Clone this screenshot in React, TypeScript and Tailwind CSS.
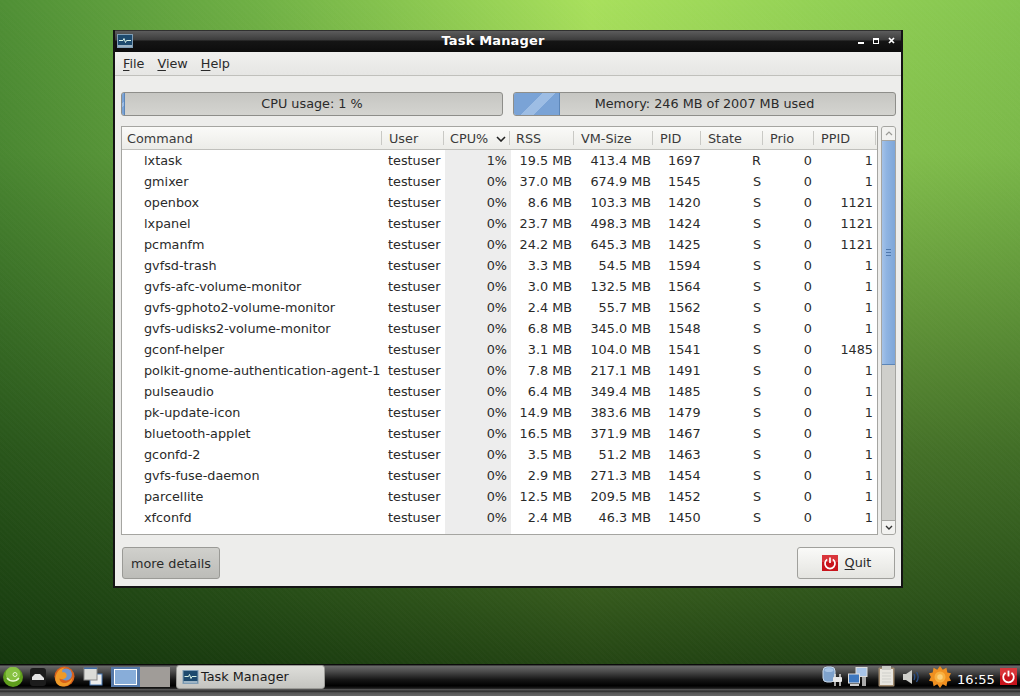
import React from 'react';

const FONT = "font-['DejaVu_Sans',sans-serif]";

type Proc = [string, string, string, string, string, string, string];

const rows: Proc[] = [
  ['lxtask', '1%', '19.5 MB', '413.4 MB', '1697', 'R', '1'],
  ['gmixer', '0%', '37.0 MB', '674.9 MB', '1545', 'S', '1'],
  ['openbox', '0%', '8.6 MB', '103.3 MB', '1420', 'S', '1121'],
  ['lxpanel', '0%', '23.7 MB', '498.3 MB', '1424', 'S', '1121'],
  ['pcmanfm', '0%', '24.2 MB', '645.3 MB', '1425', 'S', '1121'],
  ['gvfsd-trash', '0%', '3.3 MB', '54.5 MB', '1594', 'S', '1'],
  ['gvfs-afc-volume-monitor', '0%', '3.0 MB', '132.5 MB', '1564', 'S', '1'],
  ['gvfs-gphoto2-volume-monitor', '0%', '2.4 MB', '55.7 MB', '1562', 'S', '1'],
  ['gvfs-udisks2-volume-monitor', '0%', '6.8 MB', '345.0 MB', '1548', 'S', '1'],
  ['gconf-helper', '0%', '3.1 MB', '104.0 MB', '1541', 'S', '1485'],
  ['polkit-gnome-authentication-agent-1', '0%', '7.8 MB', '217.1 MB', '1491', 'S', '1'],
  ['pulseaudio', '0%', '6.4 MB', '349.4 MB', '1485', 'S', '1'],
  ['pk-update-icon', '0%', '14.9 MB', '383.6 MB', '1479', 'S', '1'],
  ['bluetooth-applet', '0%', '16.5 MB', '371.9 MB', '1467', 'S', '1'],
  ['gconfd-2', '0%', '3.5 MB', '51.2 MB', '1463', 'S', '1'],
  ['gvfs-fuse-daemon', '0%', '2.9 MB', '271.3 MB', '1454', 'S', '1'],
  ['parcellite', '0%', '12.5 MB', '209.5 MB', '1452', 'S', '1'],
  ['xfconfd', '0%', '2.4 MB', '46.3 MB', '1450', 'S', '1'],
  ['menu-cached', '0%', '2.4 MB', '52.2 MB', '1445', 'S', '1'],
];

const GRID = 'grid grid-cols-[261px_62px_66px_64px_79px_48px_62px_51px_62px]';

function Underlined({ first, rest }: { first: string; rest: string }) {
  return (
    <span>
      <span className="underline underline-offset-2">{first}</span>
      {rest}
    </span>
  );
}

function MonitorIcon({ className }: { className: string }) {
  return (
    <svg viewBox="0 0 16 14" className={className}>
      <rect x="0.5" y="0.5" width="15" height="13" fill="#1d4a6e" stroke="#7f9db5" />
      <rect x="1" y="11" width="14" height="2" fill="#9db4c4" />
      <path d="M2 6.5h4l1-2 1.5 4 1-2h4.5" fill="none" stroke="#d5f0e6" strokeWidth="1" />
    </svg>
  );
}

function PowerIcon({ className }: { className: string }) {
  return (
    <svg viewBox="0 0 16 16" className={className}>
      <rect width="16" height="16" fill="#c8141c" />
      <rect width="16" height="7" fill="#d9353a" />
      <path d="M5.2 4.4a5 5 0 1 0 5.6 0" fill="none" stroke="#fff" strokeWidth="1.7" />
      <path d="M8 2.5v5.5" stroke="#fff" strokeWidth="1.7" />
    </svg>
  );
}

function Meter({ label, fill, className }: { label: string; fill: number; className: string }) {
  return (
    <div className={`relative h-[24px] rounded-[3px] border border-[#8e8e8a] bg-[linear-gradient(#c6c6c2,#d4d4d0)] flex items-center justify-center overflow-hidden ${className}`}>
      <div
        className="absolute left-0 top-0 bottom-0 border-r border-[#5c86b8] bg-[linear-gradient(135deg,#7aa3d6_0%,#7aa3d6_42%,#9dbde4_42%,#9dbde4_62%,#7aa3d6_62%)]"
        style={{ width: fill }}
      />
      <span className="relative">{label}</span>
    </div>
  );
}

function Header({ label, sorted, tight }: { label: string; sorted?: boolean; tight?: boolean }) {
  return (
    <div className={`flex items-center justify-between pr-[5px] pt-[1px] relative ${tight ? 'pl-[5px]' : 'pl-[6px]'}`}>
      <span>{label}</span>
      {sorted && (
        <svg viewBox="0 0 10 6" className="w-[10px] h-[6px]">
          <path d="M1 1l4 4 4-4" fill="none" stroke="#222" strokeWidth="1.6" />
        </svg>
      )}
      <span className="absolute right-[1px] top-1 bottom-1 w-px bg-[#c9c9c5]" />
    </div>
  );
}

function Scrollbar() {
  return (
    <div className="w-[15px] h-[409px] ml-[3px] flex flex-col rounded-[3px] border border-[#a5a5a1] bg-[#cfcfcb] overflow-hidden">
      <div className="h-[14px] flex items-center justify-center bg-[#f2f2f0] border-b border-[#a5a5a1]">
        <svg viewBox="0 0 8 5" className="w-2 h-[5px]">
          <path d="M1 4l3-3 3 3" fill="none" stroke="#9a9a96" strokeWidth="1.2" />
        </svg>
      </div>
      <div className="h-[224px] bg-[linear-gradient(90deg,#a4c2e8,#8fb4e2_35%,#7ea6d8)] border-b border-[#5c86b8] flex flex-col gap-[2px] items-center justify-center">
        <div className="w-[5px] h-px bg-[#4f78ad]" />
        <div className="w-[5px] h-px bg-[#4f78ad]" />
        <div className="w-[5px] h-px bg-[#4f78ad]" />
      </div>
      <div className="flex-1" />
      <div className="h-[14px] flex items-center justify-center bg-[#f2f2f0] border-t border-[#a5a5a1]">
        <svg viewBox="0 0 8 5" className="w-2 h-[5px]">
          <path d="M1 1l3 3 3-3" fill="none" stroke="#333" strokeWidth="1.4" />
        </svg>
      </div>
    </div>
  );
}

function Taskbar() {
  return (
    <div className="h-[32px] mt-auto bg-[linear-gradient(#0a0a0a_0%,#0a0a0a_3%,#6a6a6a_6%,#484848_25%,#141414_50%,#000_68%,#1c1c1c_76%,#5a5a5a_80%,#2b2b2b_85%,#555_90%,#666_100%)] text-[12.8px] text-[#1a1a1a]">
      <div className="h-[25px] flex items-center">
        <div className="flex items-center pl-[3px] w-[111px] shrink-0">
          <svg viewBox="0 0 20 20" className="w-[20px] h-[20px]">
            <circle cx="10" cy="10" r="10" fill="#5f9e1c" />
            <circle cx="10" cy="7" r="7.5" fill="#a0d85a" opacity="0.6" />
            <path d="M4 11c3 4 9 4 12 0" fill="none" stroke="#e8f6d2" strokeWidth="1.4" />
            <circle cx="12" cy="7.5" r="2" fill="none" stroke="#e8f6d2" strokeWidth="1" />
          </svg>
          <svg viewBox="0 0 16 18" className="w-[16px] h-[18px] ml-[7px]">
            <rect x="0" y="0" width="16" height="18" rx="3" fill="#1c1c1c" />
            <path d="M2 9l3-3h5l4 4v2H2z" fill="#e4e4e4" />
          </svg>
          <svg viewBox="0 0 21 21" className="w-[21px] h-[21px] ml-[8px]">
            <circle cx="10.5" cy="10.5" r="10" fill="#d8601a" />
            <circle cx="12" cy="8.5" r="6" fill="#6f94cc" />
            <path d="M1.5 11c1.5-6 5-9.500 10-9.500-3 1-4 3-3 5 2-1 5 1 4 4-1 2.500-4.500 3.500-7 2 0 3 3 5 6 4.500 3-.5 6-3 7-6 0 4.500-4 9.500-9.500 9.500S.5 16 1.500 11z" fill="#f09a28" />
          </svg>
          <svg viewBox="0 0 20 20" className="w-[20px] h-[20px] ml-[8px]">
            <rect x="7" y="7" width="12" height="11" fill="#ededed" stroke="#4a7ab5" />
            <rect x="1" y="1" width="13" height="12" fill="#dcdcd8" stroke="#888" />
            <rect x="1" y="0.5" width="13" height="1.500" fill="#3f6da8" />
          </svg>
        </div>
        <div className="w-[29px] h-[20px] shrink-0 bg-[#5578a8] flex items-center justify-center">
          <div className="w-[23px] h-[16px] border-[1.5px] border-white bg-[#88add9]" />
        </div>
        <div className="w-[30px] h-[20px] shrink-0 bg-[#a09c98]" />
        <div className="ml-[6px] w-[149px] h-[24px] shrink-0 flex items-center pl-[5px] rounded-[3px] border border-[#9a9a96] bg-[linear-gradient(#dededa,#c4c4c0)]">
          <MonitorIcon className="w-[17px] h-[14px] mr-[2px]" />
          Task Manager
        </div>
        <div className="ml-[497px] flex items-center">
          <svg viewBox="0 0 22 21" className="w-[22px] h-[21px]">
            <rect x="1" y="1" width="12" height="15" rx="4" fill="#7ea2cc" stroke="#c8d8ea" />
            <ellipse cx="7" cy="4" rx="4.500" ry="2" fill="#a8c4e4" />
            <rect x="11" y="11" width="9" height="5" rx="1" fill="#e8e8e8" />
            <path d="M13 8v3M18 8v3M13 16v4M18 16v4" stroke="#e0e0e0" strokeWidth="1.500" />
          </svg>
          <svg viewBox="0 0 20 20" className="w-[20px] h-[20px] ml-[4px]">
            <rect x="8" y="0.500" width="11" height="9" fill="#a8c4e8" stroke="#ddd" />
            <rect x="0.500" y="7" width="11" height="9" fill="#3e78c0" stroke="#ddd" />
            <rect x="2" y="17" width="9" height="2" fill="#ccc" />
            <rect x="14" y="10" width="4" height="9" fill="#aaa" />
          </svg>
          <svg viewBox="0 0 17 21" className="w-[17px] h-[21px] ml-[10px]">
            <rect x="0.500" y="1.500" width="16" height="19" rx="1" fill="#a08a6e" />
            <rect x="2" y="3" width="13" height="16" fill="#e8e6e0" />
            <rect x="4" y="0" width="9" height="4" fill="#c8c8c4" />
            <path d="M4 7h9M4 10h9M4 13h9M4 16h9" stroke="#cfcfca" />
          </svg>
          <svg viewBox="0 0 17 18" className="w-[17px] h-[18px] ml-[8px]">
            <path d="M0 6h3l6-4v14l-6-4H0z" fill="#cfcfcb" />
            <path d="M11 6c1 2 1 4 0 6M13.500 4c2 3 2 7 0 10" fill="none" stroke="#2a4f88" strokeWidth="1.300" />
          </svg>
          <svg viewBox="0 0 24 24" className="w-[22px] h-[22px] ml-[9px]">
            <path d="M12 0l3 4 4-2 1 5 4 1-2 4 2 4-4 1-1 5-4-2-3 4-3-4-4 2-1-5-4-1 2-4-2-4 4-1 1-5 4 2z" fill="#f09020" />
            <circle cx="12" cy="12" r="6" fill="#f8b040" />
            <circle cx="12" cy="12" r="3" fill="#fbd07a" />
          </svg>
          <span className="w-[38px] ml-[6px] text-white text-[13px] tracking-[0.1px] pt-[6px]">16:55</span>
          <PowerIcon className="w-[17px] h-[17px] ml-[5px]" />
        </div>
      </div>
    </div>
  );
}

export default function App() {
  return (
    <div className={`relative w-[1020px] h-[696px] overflow-hidden flex flex-col ${FONT} bg-[repeating-linear-gradient(45deg,rgba(255,255,255,0.012)_0_2px,transparent_2px_4px),linear-gradient(rgba(8,36,4,0)_0%,rgba(8,36,4,0.08)_22%,rgba(8,36,4,0.3)_43%,rgba(8,36,4,0.54)_65%,rgba(8,36,4,0.72)_86%,rgba(8,36,4,0.82)_95%),linear-gradient(90deg,#4f8f35_0%,#6fb045_25%,#a8e05c_58%,#93d155_80%,#84c44f_100%)]`}>
      <div className="absolute left-[113px] top-[30px] w-[790px] h-[558px] border-x-2 border-b-2 border-[#141414] flex flex-col bg-[#ededeb] text-[12.8px] text-[#2a2a2a]">
        <div className="h-[22px] shrink-0 flex items-center pl-[2px] pr-[3px] pb-[1px] bg-[linear-gradient(#161616_0%,#5b5b5b_6%,#3c3c3c_45%,#151515_50%,#0c0c0c_100%)]">
          <MonitorIcon className="w-[16px] h-[14px]" />
          <span className="flex-1 text-center text-white font-bold text-[13px] tracking-[0.15px] pr-[5px]">Task Manager</span>
          <div className="flex items-center gap-[9px] pr-[3px] text-white">
            <div className="w-[6px] h-[2px] bg-white mt-[4px]" />
            <div className="w-[6px] h-[6px] border border-white border-t-2" />
            <svg viewBox="0 0 7 7" className="w-[7px] h-[7px]">
              <path d="M1 1l5 5M6 1l-5 5" stroke="#fff" strokeWidth="1.700" />
            </svg>
          </div>
        </div>
        <div className="h-[24px] shrink-0 flex items-center gap-[13px] pl-[8px] pt-[1px] border-b border-[#c0c0bc] bg-[linear-gradient(#f0f0ee,#e6e6e4)]">
          <Underlined first="F" rest="ile" />
          <Underlined first="V" rest="iew" />
          <Underlined first="H" rest="elp" />
        </div>
        <div className="flex gap-[10px] pl-[6px] pt-[16px]">
          <Meter label="CPU usage: 1 %" fill={3} className="w-[382px]" />
          <Meter label="Memory: 246 MB of 2007 MB used" fill={46} className="w-[383px]" />
        </div>
        <div className="flex pl-[6px] pt-[10px]">
          <div className="w-[757px] h-[409px] border border-[#a5a5a1] bg-white overflow-hidden">
            <div className={`${GRID} h-[23px] border-b border-[#c0c0bc] bg-[linear-gradient(#fafaf8,#ecece8)] text-[#3a3a3a]`}>
              <Header label="Command" tight />
              <Header label="User" />
              <Header label="CPU%" sorted tight />
              <Header label="RSS" tight />
              <Header label="VM-Size" />
              <Header label="PID" />
              <Header label="State" />
              <Header label="Prio" />
              <Header label="PPID" />
            </div>
            {rows.map((r) => (
              <div key={r[0]} className={`${GRID} h-[21px] items-center leading-[21px]`}>
                <div className="pl-[22px] whitespace-nowrap overflow-hidden">{r[0]}</div>
                <div className="pl-[5px]">testuser</div>
                <div className="text-right pr-[4px] bg-[#ededed]">{r[1]}</div>
                <div className="text-right pr-[3px]">{r[2]}</div>
                <div className="text-right pr-[3px]">{r[3]}</div>
                <div className="pl-[14px]">{r[4]}</div>
                <div className="text-right pr-[3px]">{r[5]}</div>
                <div className="text-right pr-[3px]">0</div>
                <div className="text-right pr-[4px]">{r[6]}</div>
              </div>
            ))}
          </div>
          <Scrollbar />
        </div>
        <div className="flex items-center justify-between pl-[7px] pr-[6px] pt-[12px]">
          <button className="w-[98px] h-[32px] rounded-[3px] border border-[#9a9a96] bg-[linear-gradient(#d0d0cc,#bcbcb8)] pt-[1px] text-[12.8px] text-[#2a2a2a]">more details</button>
          <button className="w-[98px] h-[32px] rounded-[3px] border border-[#a0a09c] bg-[linear-gradient(#fafaf8,#e4e4e0)] flex items-center justify-center gap-[7px] pl-[1px] text-[12.8px] text-[#2a2a2a]">
            <PowerIcon className="w-[16px] h-[16px]" />
            <Underlined first="Q" rest="uit" />
          </button>
        </div>
      </div>
      <Taskbar />
    </div>
  );
}
